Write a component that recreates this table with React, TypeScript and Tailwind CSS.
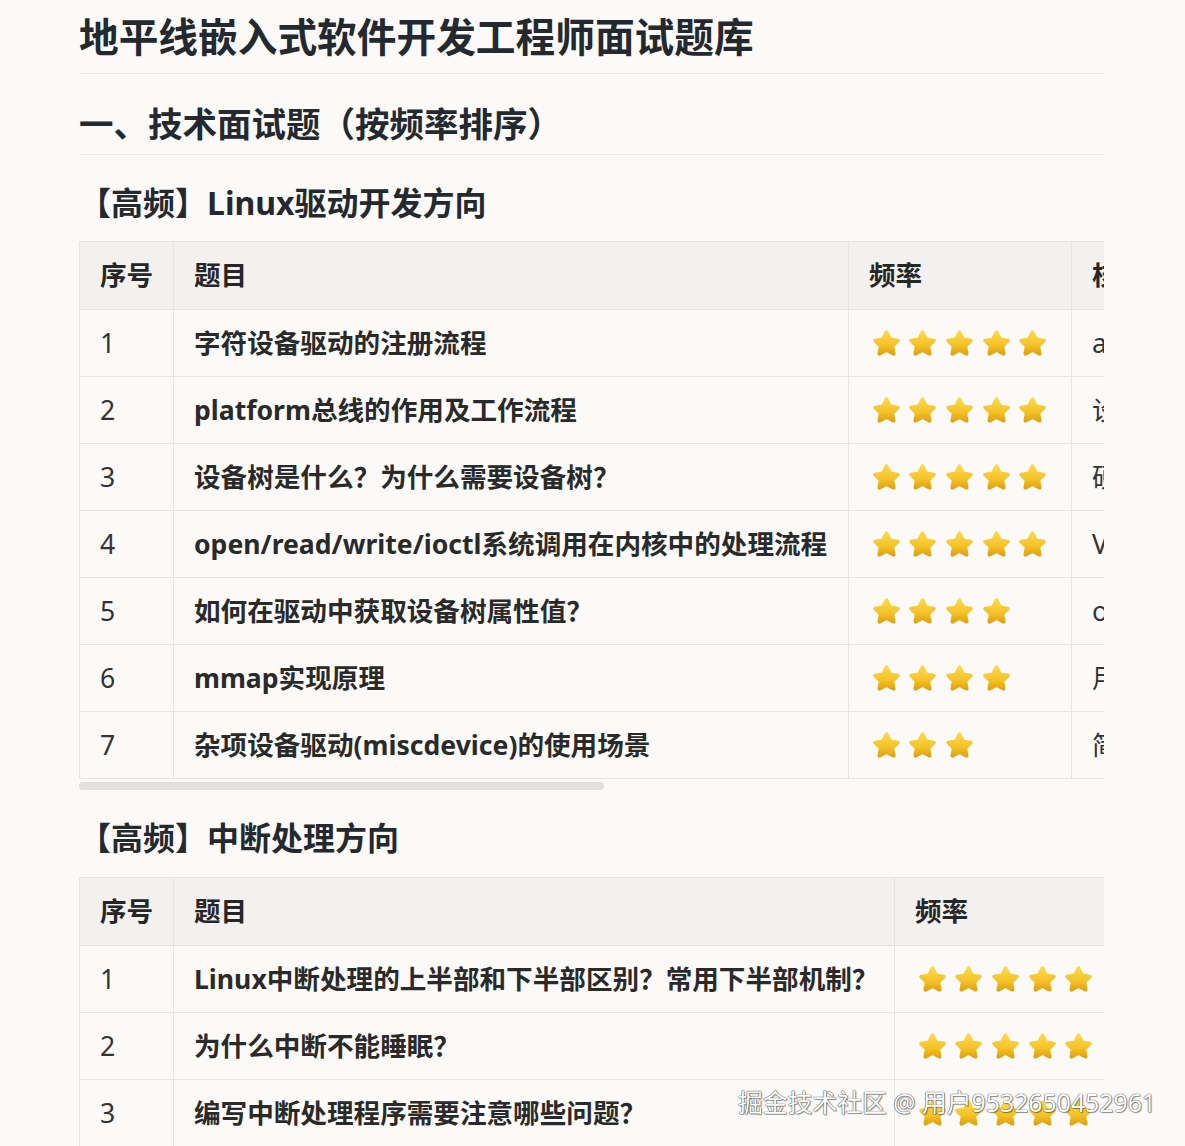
import React from 'react';

type Row = { no: number; title: string; stars: number; point: string };

const driverRows: Row[] = [
  { no: 1, title: '字符设备驱动的注册流程', stars: 5, point: 'alloc_chrdev_region、cdev_init、cdev_add、class_create、device_create' },
  { no: 2, title: 'platform总线的作用及工作流程', stars: 5, point: '设备与驱动分离，通过match函数匹配，匹配成功后调用probe' },
  { no: 3, title: '设备树是什么？为什么需要设备树？', stars: 5, point: '硬件描述的数据结构，将硬件信息与驱动代码解耦' },
  { no: 4, title: 'open/read/write/ioctl系统调用在内核中的处理流程', stars: 5, point: 'VFS → file_operations → 驱动具体实现' },
  { no: 5, title: '如何在驱动中获取设备树属性值？', stars: 4, point: 'of_property_read_u32、of_get_named_gpio等接口' },
  { no: 6, title: 'mmap实现原理', stars: 4, point: '用户空间直接映射内核/设备内存，remap_pfn_range' },
  { no: 7, title: '杂项设备驱动(miscdevice)的使用场景', stars: 3, point: '简化字符设备注册，主设备号固定为10' },
];

const irqRows: Row[] = [
  { no: 1, title: 'Linux中断处理的上半部和下半部区别？常用下半部机制？', stars: 5, point: '上半部快速响应，下半部处理耗时任务：softirq、tasklet、workqueue' },
  { no: 2, title: '为什么中断不能睡眠？', stars: 5, point: '中断上下文没有进程结构，无法被调度' },
  { no: 3, title: '编写中断处理程序需要注意哪些问题？', stars: 5, point: '快进快出，不可睡眠，注意共享中断与并发保护' },
];

function Star() {
  return (
    <svg viewBox="0 0 24 24" className="w-[31px] h-[31px]">
      <defs>
        <linearGradient id="starFill" x1="0" y1="0" x2="0" y2="1">
          <stop offset="0" stopColor="#fcd84c" />
          <stop offset="0.6" stopColor="#f4c228" />
          <stop offset="1" stopColor="#e2a313" />
        </linearGradient>
      </defs>
      <path
        d="M12 3.2l2.9 5.5 6 .95-4.3 4.3 1 6-5.6-2.8-5.6 2.8 1-6-4.3-4.3 6-.95z"
        fill="url(#starFill)"
        stroke="url(#starFill)"
        strokeWidth="2.8"
        strokeLinejoin="round"
      />
    </svg>
  );
}

function Stars({ count }: { count: number }) {
  return (
    <div className="flex items-center h-[40px]">
      {Array.from({ length: count }).map((_, i) => (
        <span key={i} className="w-[36.6px] flex justify-center">
          <Star />
        </span>
      ))}
    </div>
  );
}

function QuestionTable({ rows, titleWidth, tableWidth }: { rows: Row[]; titleWidth: string; tableWidth: string }) {
  const cell = 'border border-[#e6e5e4] px-[20px] text-left align-middle whitespace-nowrap';
  return (
    <div className="overflow-hidden">
      <table className={`table-fixed border-collapse ${tableWidth} text-[26.6px]`}>
        <thead>
          <tr className="bg-[#f2f1f0]">
            <th className={`${cell} w-[94px] py-[13px] leading-[41px] font-bold text-[#262626]`}>序号</th>
            <th className={`${cell} ${titleWidth} py-[13px] leading-[41px] font-bold text-[#262626]`}>题目</th>
            <th className={`${cell} w-[223px] py-[13px] leading-[41px] font-bold text-[#262626]`}>频率</th>
            <th className={`${cell} w-[1010px] py-[13px] leading-[41px] font-bold text-[#262626]`}>核心考点</th>
          </tr>
        </thead>
        <tbody>
          {rows.map((r) => (
            <tr key={r.no}>
              <td className={`${cell} py-[13px] leading-[40px] text-[#333]`}>{r.no}</td>
              <td className={`${cell} py-[13px] leading-[40px] font-bold text-[#2a2a2a]`}>{r.title}</td>
              <td className={`${cell} py-[13px] leading-[40px] pl-[19px]`}>
                <Stars count={r.stars} />
              </td>
              <td className={`${cell} py-[13px] leading-[40px] text-[#333]`}>{r.point}</td>
            </tr>
          ))}
        </tbody>
      </table>
    </div>
  );
}

export default function App() {
  return (
    <div className="relative h-[1146px] overflow-hidden bg-[#fbfaf9] font-['Noto_Sans','Noto_Sans_CJK_SC',sans-serif] text-[#24292f]">
      <div className="ml-[79px] w-[1025px]">
        <h1 className="pt-[12px] pb-[11px] text-[39.7px] leading-[50px] font-bold border-b border-[#ebeae8]">
          地平线嵌入式软件开发工程师面试题库
        </h1>
        <h2 className="mt-[28px] pb-[8px] text-[34.5px] leading-[44px] font-bold border-b border-[#ebeae8]">
          一、技术面试题（按频率排序）
        </h2>
        <h3 className="mt-[28px] text-[32px] leading-[40px] font-bold">【高频】Linux驱动开发方向</h3>
        <div className="mt-[18px]">
          <QuestionTable rows={driverRows} titleWidth="w-[675px]" tableWidth="w-[2002px]" />
          <div className="mt-[3px] h-[8px] w-[1025px]">
            <div className="h-full w-[525px] rounded-full bg-[#e2e1e0]" />
          </div>
        </div>
        <h3 className="mt-[28px] text-[32px] leading-[40px] font-bold">【高频】中断处理方向</h3>
        <div className="mt-[19px]">
          <QuestionTable rows={irqRows} titleWidth="w-[721px]" tableWidth="w-[2048px]" />
        </div>
      </div>
      <div className="absolute right-[29px] top-[1086px] text-[24.8px] leading-[32px] text-white font-['Noto_Sans','Noto_Sans_CJK_SC',sans-serif] [text-shadow:0_0_1px_#3a3a3a,0_0_1px_#3a3a3a,1px_1px_1px_rgba(0,0,0,0.35)]">
        掘金技术社区 @ 用户9532650452961
      </div>
    </div>
  );
}
